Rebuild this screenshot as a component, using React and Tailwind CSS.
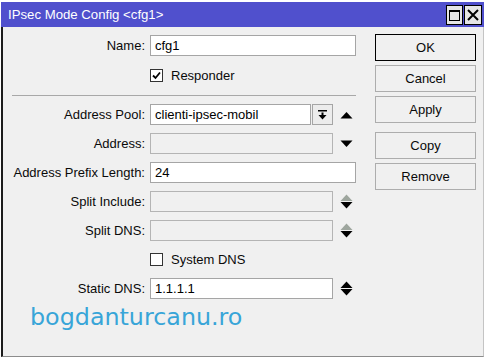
import React from 'react'

function Tri({ kind }) {
  // small spinner arrows to the right of fields
  return (
    <svg width="13" height="21" viewBox="0 0 13 21" className="ml-[7px] shrink-0">
      {kind === 'up' && <polygon points="0.5,14.5 6.5,8 12.5,14.5" fill="#000" />}
      {kind === 'down' && <polygon points="0.5,7.5 12.5,7.5 6.5,14" fill="#000" />}
      {(kind === 'both' || kind === 'both-grey') && (
        <>
          <polygon points="0.5,10 6.5,3.5 12.5,10" fill={kind === 'both' ? '#000' : '#9ea69e'} />
          <polygon points="0.5,11 12.5,11 6.5,17.5" fill="#000" />
        </>
      )}
    </svg>
  )
}

function Input({ value, w, disabled }) {
  return (
    <div
      className={`h-[21px] ${w} border ${disabled ? 'border-[#b4b4b4] bg-[#f0f0f0]' : 'border-[#a5a5a5] bg-white'} pl-[4px] flex items-center leading-none`}
    >
      {value}
    </div>
  )
}

function Row({ label, children, className = '' }) {
  return (
    <div className={`flex items-center h-[21px] ${className}`}>
      <div className="w-[142px] shrink-0 text-right text-[#0a0a0a]">{label}</div>
      <div className="ml-[5px] flex items-center">{children}</div>
    </div>
  )
}

function Check({ checked, label, className = '' }) {
  return (
    <div className={`flex items-center h-[21px] pl-[147px] ${className}`}>
      <div className="w-[13px] h-[13px] border border-[#333] bg-white flex items-center justify-center">
        {checked && (
          <svg width="9" height="9" viewBox="0 0 9 9">
            <path d="M1 4.5 L3.5 7 L8 1.5" stroke="#000" strokeWidth="1.8" fill="none" />
          </svg>
        )}
      </div>
      <span className="ml-[8px] text-[#0a0a0a]">{label}</span>
    </div>
  )
}

function Btn({ children, primary, className = '' }) {
  return (
    <div
      className={`h-[27px] w-[101px] flex items-center justify-center border ${primary ? 'border-black' : 'border-[#adadad]'} bg-[#f0f0f0] text-[#0a0a0a] ${className}`}
    >
      {children}
    </div>
  )
}

export default function App() {
  return (
    <div className="w-[487px] h-[360px] bg-white pt-[2px] pl-[1px] overflow-hidden font-['Liberation_Sans',Arial,sans-serif] text-[13px] text-black">
      <div className="w-[483px] h-[355px] flex flex-col">
        <div className="h-[25px] shrink-0 bg-[#5050cd] flex">
          <span className="pl-[7px] pt-[4px] text-white text-[13.2px] leading-[17px]">IPsec Mode Config &lt;cfg1&gt;</span>
          <div className="ml-auto mt-[3px] pr-[2px] flex gap-[1px]">
            <div className="w-[17px] h-[20px] bg-[#e6e6e6] border border-black flex items-center justify-center">
              <div className="w-[11px] h-[11px] border border-black border-t-2"></div>
            </div>
            <div className="w-[18px] h-[20px] bg-[#e6e6e6] border border-black flex items-center justify-center">
              <svg width="12" height="12" viewBox="0 0 12 12">
                <path d="M1 1 L11 11 M11 1 L1 11" stroke="#000" strokeWidth="2" />
              </svg>
            </div>
          </div>
        </div>

        <div className="flex-1 flex bg-[#f0f0f0] border-l-2 border-l-[#1c1c1c] border-r border-r-[#c4c4c4] border-b border-b-[#8c8c8c]">
          <div className="w-[372px] shrink-0 pt-[8px]">
            <Row label="Name:">
              <Input value="cfg1" w="w-[206px]" />
            </Row>
            <Check checked label="Responder" className="mt-[9px]" />
            <div className="mt-[9px] ml-[9px] w-[344px] border-t border-[#a8a8a8]"></div>

            <Row label="Address Pool:" className="mt-[8px]">
              <Input value="clienti-ipsec-mobil" w="w-[161px]" />
              <div className="ml-[1px] w-[21px] h-[21px] border border-[#a5a5a5] bg-[#ececec] flex items-center justify-center">
                <svg width="9" height="10" viewBox="0 0 9 10">
                  <rect x="0" y="0" width="9" height="1.5" fill="#000" />
                  <rect x="3.5" y="2.5" width="2" height="3" fill="#000" />
                  <polygon points="0.5,5 8.5,5 4.5,9.5" fill="#000" />
                </svg>
              </div>
              <Tri kind="up" />
            </Row>
            <Row label="Address:" className="mt-[8px]">
              <Input value="" w="w-[183px]" disabled />
              <Tri kind="down" />
            </Row>
            <Row label="Address Prefix Length:" className="mt-[8px]">
              <Input value="24" w="w-[206px]" />
            </Row>
            <Row label="Split Include:" className="mt-[8px]">
              <Input value="" w="w-[183px]" disabled />
              <Tri kind="both-grey" />
            </Row>
            <Row label="Split DNS:" className="mt-[8px]">
              <Input value="" w="w-[183px]" disabled />
              <Tri kind="both-grey" />
            </Row>
            <Check label="System DNS" className="mt-[8px]" />
            <Row label="Static DNS:" className="mt-[8px]">
              <Input value="1.1.1.1" w="w-[183px]" />
              <Tri kind="both" />
            </Row>

            <div className="mt-[5px] ml-[27px] text-[23.8px] leading-[27px] text-[#38a5d8] font-['DejaVu_Sans',Verdana,sans-serif]">
              bogdanturcanu.ro
            </div>
          </div>

          <div className="pt-[7px]">
            <Btn primary>OK</Btn>
            <Btn className="mt-[4px]">Cancel</Btn>
            <Btn className="mt-[4px]">Apply</Btn>
            <Btn className="mt-[9px]">Copy</Btn>
            <Btn className="mt-[4px]">Remove</Btn>
          </div>
        </div>
      </div>
    </div>
  )
}
